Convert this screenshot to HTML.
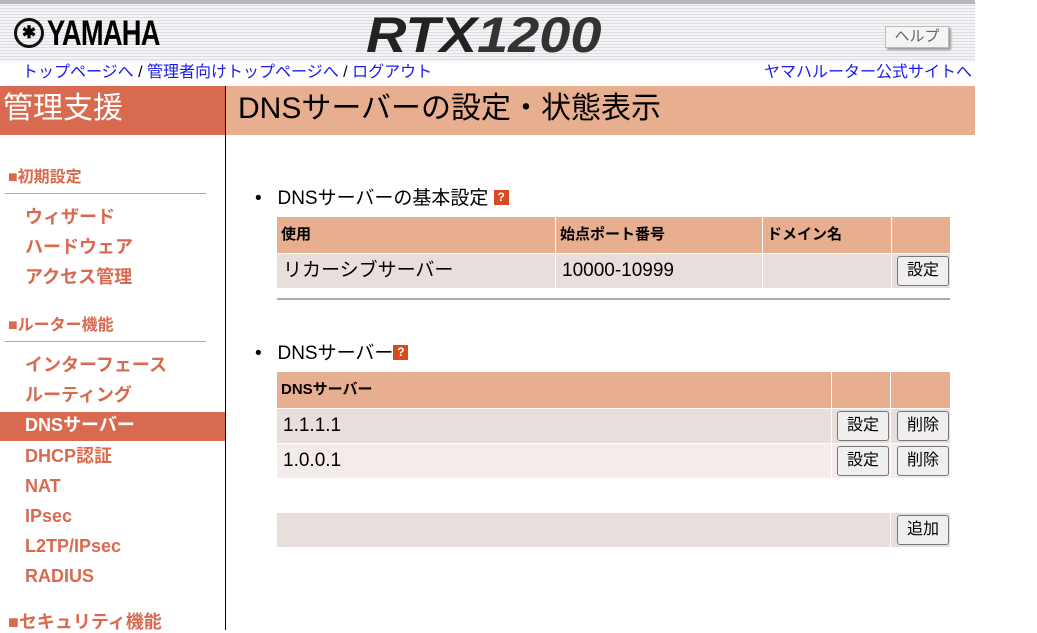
<!DOCTYPE html>
<html><head><meta charset="utf-8"><style>
*{margin:0;padding:0;box-sizing:border-box}
body{width:1037px;height:630px;overflow:hidden;background:#fff;position:relative;font-family:"Liberation Sans","Noto Sans CJK JP",sans-serif;color:#000}
.a{position:absolute;white-space:nowrap}
.hdr{left:0;top:3px;width:975px;height:59px;background:repeating-linear-gradient(#f4f4f6 0,#f4f4f6 2px,#dcdce2 2px,#dcdce2 3px);}
.top{left:0;top:0;width:975px;height:4px;background:#b8b6be}
.lnk{color:#1a1aee;font-size:16px;top:62px;line-height:22px}
.side{color:#d86a50;font-weight:bold;font-size:18px;left:25px;line-height:22px}
.sec{color:#d86a50;font-weight:bold;font-size:16px;left:8px;line-height:22px}
.line{height:1px;background:#aaa;left:5px;width:201px}
.cell{position:absolute;font-size:19px;line-height:28px}
.h{background:#e8ae90;font-weight:bold;font-size:15px;padding:4px 4px;line-height:28px}
.r1{background:#e8dedc}
.r2{background:#f4ecea}
.btn{position:absolute;border:1px solid #777;border-radius:3px;background:#efefef;font-size:16px;text-align:center;line-height:28px;height:30px}
.q{display:inline-block;width:15px;height:15px;background:#d84a20;color:#fff;font-size:12px;font-weight:bold;text-align:center;line-height:15px;vertical-align:3px}
</style></head><body>
<div class="a hdr"></div><div class="a top"></div>
<div class="a" style="left:14px;top:18px;width:30px;height:30px;border:3px solid #111;border-radius:50%;font-size:17px;text-align:center;line-height:24px;font-weight:bold">✱</div>
<div class="a" style="left:47px;top:13px;font-size:35px;font-weight:bold;letter-spacing:-1px;transform:scaleX(0.78);transform-origin:left;line-height:42px">YAMAHA</div>
<div class="a" style="left:366px;top:6px;font-size:50px;font-weight:bold;font-style:italic;color:#222;line-height:58px;transform:scaleX(1.12);transform-origin:left">RTX<span style="color:#333">1200</span></div>
<div class="a" style="left:885px;top:26px;width:64px;height:22px;background:#f4f4f4;border:1px solid #bbb;box-shadow:2px 2px 2px #999;font-size:15px;color:#666;text-align:center;line-height:20px">ヘルプ</div>
<div class="a lnk" style="left:22px">トップページへ <span style="color:#000">/</span> 管理者向けトップページへ <span style="color:#000">/</span> ログアウト</div>
<div class="a lnk" style="left:764px">ヤマハルーター公式サイトへ</div>
<div class="a" style="left:0;top:86px;width:225px;height:49px;background:#d86a50;color:#fff;font-size:30px;line-height:46px;padding-left:3px">管理支援</div>
<div class="a" style="left:225px;top:86px;width:750px;height:49px;background:#e8ae90;font-size:30px;line-height:46px;padding-left:13px">DNSサーバーの設定・状態表示</div>
<div class="a" style="left:225px;top:86px;width:1px;height:544px;background:#000"></div>
<div class="a sec" style="top:167px">■初期設定</div><div class="a line" style="top:193px"></div>
<div class="a side" style="top:206px">ウィザード</div>
<div class="a side" style="top:236px">ハードウェア</div>
<div class="a side" style="top:266px">アクセス管理</div>
<div class="a sec" style="top:315px">■ルーター機能</div><div class="a line" style="top:341px"></div>
<div class="a side" style="top:354px">インターフェース</div>
<div class="a side" style="top:384px">ルーティング</div>
<div class="a" style="left:0;top:412px;width:225px;height:29px;background:#d86a50"></div>
<div class="a side" style="top:414px;color:#fff">DNSサーバー</div>
<div class="a side" style="top:445px">DHCP認証</div>
<div class="a side" style="top:475px">NAT</div>
<div class="a side" style="top:505px">IPsec</div>
<div class="a side" style="top:535px">L2TP/IPsec</div>
<div class="a side" style="top:565px">RADIUS</div>
<div class="a sec" style="top:611px;font-size:18px">■セキュリティ機能</div>

<div class="a" style="left:255px;top:186px;font-size:19px;line-height:26px">•&nbsp;&nbsp; DNSサーバーの基本設定 <span class="q">?</span></div>
<div class="cell h" style="left:277px;top:217px;width:278px;height:36px">使用</div>
<div class="cell h" style="left:556px;top:217px;width:206px;height:36px">始点ポート番号</div>
<div class="cell h" style="left:763px;top:217px;width:128px;height:36px">ドメイン名</div>
<div class="cell h" style="left:892px;top:217px;width:58px;height:36px"></div>
<div class="cell r1" style="left:277px;top:254px;width:278px;height:34px;padding:3px 6px">リカーシブサーバー</div>
<div class="cell r1" style="left:556px;top:254px;width:206px;height:34px;padding:3px 6px">10000-10999</div>
<div class="cell r1" style="left:763px;top:254px;width:128px;height:34px"></div>
<div class="cell r1" style="left:892px;top:254px;width:58px;height:34px"></div>
<div class="btn" style="left:897px;top:256px;width:52px">設定</div>
<div class="a" style="left:277px;top:298px;width:673px;height:2px;background:#aaa"></div>

<div class="a" style="left:255px;top:341px;font-size:19px;line-height:26px">•&nbsp;&nbsp; DNSサーバー<span class="q">?</span></div>
<div class="cell h" style="left:277px;top:372px;width:554px;height:36px">DNSサーバー</div>
<div class="cell h" style="left:832px;top:372px;width:58px;height:36px"></div>
<div class="cell h" style="left:891px;top:372px;width:59px;height:36px"></div>
<div class="cell r1" style="left:277px;top:409px;width:554px;height:34px;padding:3px 6px">1.1.1.1</div>
<div class="cell r1" style="left:832px;top:409px;width:58px;height:34px"></div>
<div class="cell r1" style="left:891px;top:409px;width:59px;height:34px"></div>
<div class="cell r2" style="left:277px;top:444px;width:554px;height:34px;padding:3px 6px">1.0.0.1</div>
<div class="cell r2" style="left:832px;top:444px;width:58px;height:34px"></div>
<div class="cell r2" style="left:891px;top:444px;width:59px;height:34px"></div>
<div class="btn" style="left:837px;top:411px;width:52px">設定</div>
<div class="btn" style="left:897px;top:411px;width:52px">削除</div>
<div class="btn" style="left:837px;top:446px;width:52px">設定</div>
<div class="btn" style="left:897px;top:446px;width:52px">削除</div>

<div class="cell r1" style="left:277px;top:513px;width:613px;height:34px"></div>
<div class="cell r1" style="left:891px;top:513px;width:59px;height:34px"></div>
<div class="btn" style="left:897px;top:515px;width:52px">追加</div>
</body></html>
